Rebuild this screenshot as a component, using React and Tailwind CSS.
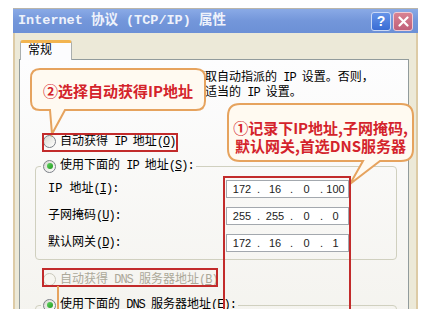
import React from 'react';

// SimSun-like look: mono Latin + CJK sans fallback
const sim = "font-['Liberation_Mono','Noto_Sans_CJK_SC',monospace]";

function Lt({ children }) {
  return <span className="tracking-[-1px]">{children}</span>;
}

function Radio({ checked, disabled }) {
  return (
    <span
      className={`w-[13px] h-[13px] shrink-0 rounded-full border flex items-center justify-center ${
        disabled
          ? 'border-[#cac8bb] bg-[#f7f6f0]'
          : 'border-[#7c8088] bg-gradient-to-br from-[#d9d9d2] to-white'
      }`}
    >
      {checked && <span className="w-[6px] h-[6px] rounded-full bg-gradient-to-br from-[#62d462] to-[#1c9a1c]" />}
    </span>
  );
}

function IpField({ parts }) {
  const widths = ['w-[30px]', 'w-[30px]', 'w-[27px]', 'flex-1'];
  return (
    <div className="w-[123px] h-[18px] border border-[#a3a8ae] bg-white flex items-center font-['Liberation_Sans',sans-serif] text-[11px] text-[#222]">
      {widths.map((w, i) => (
        <React.Fragment key={i}>
          {i > 0 && <span className="w-[3px] text-center">.</span>}
          <span className={`${w} text-center`}>{parts ? parts[i] : ''}</span>
        </React.Fragment>
      ))}
    </div>
  );
}

function FieldRow({ label, parts }) {
  return (
    <div className="h-[18px] flex items-center">
      <span className="w-[178px]">{label}</span>
      <IpField parts={parts} />
    </div>
  );
}

export default function App() {
  return (
    <div className={`relative w-[432px] h-[309px] overflow-hidden bg-white pt-[8px] pl-[13px] ${sim}`}>
      <div className="w-[405px]">
        {/* 标题栏 */}
        <div className="h-[25px] flex items-center pl-[5px] pr-[5px] border-t border-[#b9b5aa] bg-gradient-to-b from-[#8aaae6] via-[#7396da] to-[#6c90d6]">
          <span className="flex-1 whitespace-nowrap text-[13.5px] font-bold text-[#eef2fb]">
            Internet 协议 (TCP/IP) 属性
          </span>
          <div className="w-[20px] h-[19px] rounded-[3px] border border-[#cbd9f6] bg-gradient-to-b from-[#6593e8] to-[#3a6cd4] flex items-center justify-center text-white text-[14px] font-bold font-['Liberation_Sans',sans-serif]">
            ?
          </div>
          <div className="ml-[2px] w-[20px] h-[19px] rounded-[3px] border border-[#f1cbd3] bg-gradient-to-b from-[#d98292] to-[#c0607a] flex items-center justify-center">
            <svg width="11" height="11" viewBox="0 0 11 11">
              <path d="M1.5 1.5 L9.5 9.5 M9.5 1.5 L1.5 9.5" stroke="white" strokeWidth="2.2" strokeLinecap="round" />
            </svg>
          </div>
        </div>

        {/* 窗口主体 */}
        <div className="h-[300px] bg-[#ece9d8] border-x-2 border-[#ddcba6] pt-[7px] pl-[4px] pr-[7px]">
          <div className="relative z-10 ml-[1px] -mb-[1px] w-[52px] h-[20px] rounded-t-[3px] border-x border-[#a9aeae] border-t-[3px] border-t-[#f2b450] bg-[#fcfcfe] pl-[7px] text-[12px] leading-[17px] text-black">
            常规
          </div>
          <div className="h-[270px] border border-[#919b9c] bg-gradient-to-b from-[#fdfdfe] to-[#f4f3ee] text-[12px] text-black">
            <p className="pt-[11px] pl-[17px] leading-[15px] whitespace-nowrap">
              如果网络支持此功能，则可以获取自动指派的<Lt> IP </Lt>设置。否则，
              <br />
              您需要从网络系统管理员处获得适当的<Lt> IP </Lt>设置。
            </p>

            <div className="mt-[31px] ml-[23px] h-[19px] flex items-center gap-[4px]">
              <Radio />
              <span>
                自动获得<Lt> IP </Lt>地址<Lt>(<u>O</u>)</Lt>
              </span>
            </div>

            <fieldset className="mt-[6px] ml-[15px] mr-[11px] border border-[#d0d0bf] rounded-[4px]">
              <legend className="ml-[5px] px-[2px]">
                <span className="h-[16px] inline-flex items-center gap-[4px]">
                  <Radio checked />
                  <span>
                    使用下面的<Lt> IP </Lt>地址<Lt>(<u>S</u>):</Lt>
                  </span>
                </span>
              </legend>
              <div className="pl-[12px] pt-[5px] pb-[7px] flex flex-col gap-[9px]">
                <FieldRow label={<>IP 地址<Lt>(<u>I</u>):</Lt></>} parts={['172', '16', '0', '100']} />
                <FieldRow label={<>子网掩码<Lt>(<u>U</u>):</Lt></>} parts={['255', '255', '0', '0']} />
                <FieldRow label={<>默认网关<Lt>(<u>D</u>):</Lt></>} parts={['172', '16', '0', '1']} />
              </div>
            </fieldset>

            <div className="mt-[10px] ml-[23px] h-[19px] flex items-center gap-[4px] text-[#aca899]">
              <Radio disabled />
              <span>
                自动获得<Lt> DNS </Lt>服务器地址<Lt>(<u>B</u>)</Lt>
              </span>
            </div>

            <fieldset className="mt-[7px] ml-[15px] mr-[11px] border border-[#d0d0bf] rounded-[4px]">
              <legend className="ml-[5px] px-[2px]">
                <span className="h-[16px] inline-flex items-center gap-[4px]">
                  <Radio checked />
                  <span>
                    使用下面的<Lt> DNS </Lt>服务器地址<Lt>(<u>E</u>):</Lt>
                  </span>
                </span>
              </legend>
              <div className="pl-[12px] pt-[5px] pb-[7px] flex flex-col gap-[9px]">
                <FieldRow label={<>首选 DNS 服务器<Lt>(<u>P</u>):</Lt></>} />
                <FieldRow label={<>备用 DNS 服务器<Lt>(<u>A</u>):</Lt></>} />
              </div>
            </fieldset>
          </div>
        </div>
      </div>

      {/* 标注气泡 */}
      <svg className="absolute left-0 top-0 pointer-events-none" width="432" height="309">
        <path
          d="M40 69 H196 Q205 69 205 78 V101 Q205 110 196 110 H65 L52 134 L50 110 H40 Q31 110 31 101 V78 Q31 69 40 69 Z"
          fill="#fffaf1"
          stroke="#e6a35e"
          strokeWidth="2"
        />
        <path
          d="M240 104 H401 Q413 104 413 116 V149 Q413 161 401 161 H380 L350 184 L363 161 H240 Q228 161 228 149 V116 Q228 104 240 104 Z"
          fill="#fffaf1"
          stroke="#e6a35e"
          strokeWidth="2"
        />
      </svg>
      <div className="absolute left-[31px] top-[70px] w-[174px] h-[40px] pt-[2px] flex items-center justify-center whitespace-nowrap font-['Noto_Sans_CJK_SC',sans-serif] text-[15px] font-bold text-[#d4232b]">
        ②选择自动获得IP地址
      </div>
      <div className="absolute left-[228px] top-[119px] w-[185px] text-center whitespace-nowrap leading-[18px] font-['Noto_Sans_CJK_SC',sans-serif] text-[15px] font-bold text-[#d4232b]">
        ①记录下IP地址,子网掩码,
        <br />
        默认网关,首选DNS服务器
      </div>

      {/* 红框 */}
      <div className="absolute left-[42px] top-[133px] w-[136px] h-[19px] border-2 border-[#c22b2b]" />
      <div className="absolute left-[223px] top-[176px] w-[128px] h-[160px] border-2 border-[#c22b2b]" />
      <div className="absolute left-[42px] top-[268px] w-[176px] h-[19px] border-2 border-[#c22b2b]" />
      <div className="absolute left-[57px] top-[286px] w-[2px] h-[30px] bg-[#e6a35e]" />
    </div>
  );
}
